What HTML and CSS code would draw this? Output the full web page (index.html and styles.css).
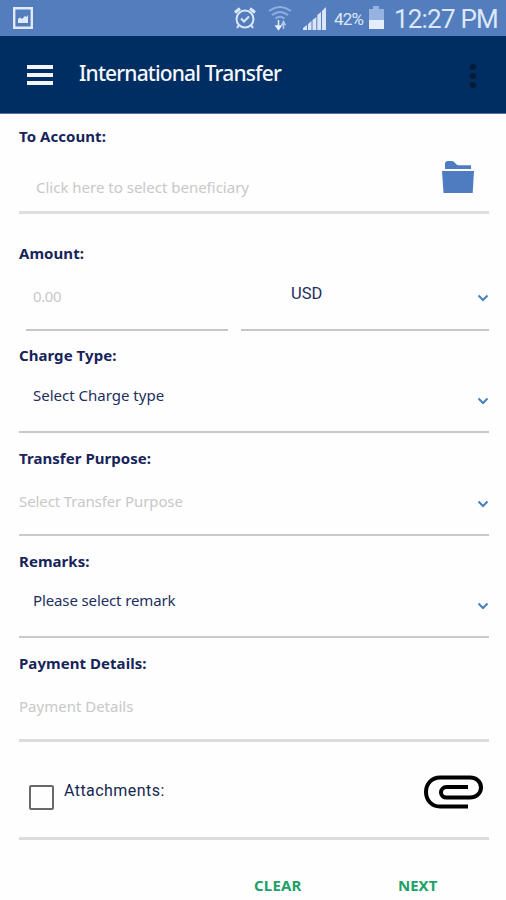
FILE: index.html
```html
<!DOCTYPE html>
<html lang="en">
<head>
<meta charset="utf-8">
<title>International Transfer</title>
<link rel="stylesheet" href="styles.css">
</head>
<body>
<div class="status">
  <svg class="shot" width="20" height="22" viewBox="0 0 20 22"><path d="M1.2 1.2h17.6v19.6H1.2z" fill="none" stroke="#e0eafa" stroke-width="2.4"/><path d="M5 16V12l2-1.500 2 1.500 3-3 1.500 1L15 8v8z" fill="#e0eafa"/></svg>
  <svg class="alarm" width="24" height="24" viewBox="0 0 24 24" fill="none" stroke="#dce8fa" stroke-width="2"><circle cx="12" cy="13" r="8.500"/><path d="M2 6.500 7 2.500M22 6.500 17 2.500" stroke-width="3"/><path d="M8 12.500l3 3 5-5M6 19l-2 3M18 19l2 3"/></svg>
  <svg class="wifi" width="24" height="26" viewBox="0 0 24 26" fill="none" stroke="#8fafe0" stroke-width="2"><path d="M1 5Q12-3 23 5M4 9q8-6 16 0M7.500 12.500q4.500-3.500 9 0"/><path d="M10.500 14v8M8 20l2.500 3.500L13 20z" stroke="#e6effc" fill="#e6effc" stroke-width="1.500"/><path d="M15.500 23v-7M14 18.500l1.500-3 1.500 3z" stroke="#b4caec" stroke-width="1.500"/></svg>
  <svg class="signal" width="23" height="23" viewBox="0 0 23 23" fill="#d9e6f9"><path d="M0 23v-2l4-3v5zM5 23v-6l3.500-3v9zM9.500 23V13l3.800-3v13zM14.300 23V8L18 5v18zM19 23V4L23 0v23z"/></svg>
  <span class="pct">42%</span>
  <svg class="battery" width="15" height="23" viewBox="0 0 15 23"><path d="M0 3h4V0h6v3h5v11H0z" fill="#94b3e1"/><path d="M0 14h15v9H0z" fill="#e4edfb"/></svg>
  <span class="time">12:27 PM</span>
</div>
<header class="bar">
  <div class="burger"><i></i><i></i><i></i></div>
  <h1>International Transfer</h1>
  <div class="dots"><i></i><i></i><i></i></div>
</header>
<main>
  <section class="field account">
    <label>To Account:</label>
    <div class="row"><span class="hint">Click here to select beneficiary</span>
      <svg class="folder" width="32" height="32" viewBox="0 0 32 32" fill="#4f7cc0"><path d="M3 8V3q0-3 3-3h4q2 0 4 3 1 1.200 3 1.200h12V8z"/><path d="M0 10h32l-1.300 22H1.500z"/></svg>
    </div>
  </section>
  <section class="field amount">
    <label>Amount:</label>
    <div class="split">
      <div class="cell sum"><span class="hint">0.00</span></div>
      <div class="cell currency"><span class="value">USD</span><svg class="chev" width="12" height="8" viewBox="0 0 12 8"><path d="M1.500 1.500 6 6l4.500-4.500"/></svg></div>
    </div>
  </section>
  <section class="field charge">
    <label>Charge Type:</label>
    <div class="row"><span class="value">Select Charge type</span><svg class="chev" width="12" height="8" viewBox="0 0 12 8"><path d="M1.500 1.500 6 6l4.500-4.500"/></svg></div>
  </section>
  <section class="field purpose">
    <label>Transfer Purpose:</label>
    <div class="row"><span class="hint">Select Transfer Purpose</span><svg class="chev" width="12" height="8" viewBox="0 0 12 8"><path d="M1.500 1.500 6 6l4.500-4.500"/></svg></div>
  </section>
  <section class="field remarks">
    <label>Remarks:</label>
    <div class="row"><span class="value">Please select remark</span><svg class="chev" width="12" height="8" viewBox="0 0 12 8"><path d="M1.500 1.500 6 6l4.500-4.500"/></svg></div>
  </section>
  <section class="field details">
    <label>Payment Details:</label>
    <div class="row"><span class="hint">Payment Details</span></div>
  </section>
  <section class="attach">
    <span class="box"></span><span class="caption">Attachments:</span>
    <svg class="clip" width="59" height="34" viewBox="0 0 59 34" fill="none" stroke="#000" stroke-width="4"><path d="M44 31.500H16C7.500 31.500 2 25 2 17S7.500 2.500 16 2.500H46c6 0 11 4 11 10s-5 10-11 10H22.500c-3 0-5.500-2-5.500-5s2.500-5.500 5.500-5.500H44"/></svg>
  </section>
  <footer><span class="clear">CLEAR</span><span class="next">NEXT</span></footer>
</main>
</body>
</html>
```
FILE: styles.css
```css
* { box-sizing: border-box; }
body { margin: 0; width: 506px; height: 900px; overflow: hidden; background: #fefefe; font-family: "Noto Sans", "Open Sans", sans-serif; color: #152653; }
span, label, h1 { white-space: nowrap; }
svg { display: block; flex: none; }

.status { height: 36px; background: #537dbd; display: flex; align-items: flex-start; font-family: Roboto, sans-serif; color: #dce8fa; }
.shot { margin: 7px 0 0 13px; }
.alarm { margin: 6px 0 0 200px; }
.wifi { margin: 6px 0 0 11px; }
.signal { margin: 7px 0 0 11px; }
.pct { width: 34px; margin: 8px 0 0 8px; font-size: 17px; line-height: 22px; letter-spacing: -0.8px; }
.battery { margin: 6px 0 0 1px; }
.time { margin: 4px 0 0 10px; font-size: 26px; line-height: 31px; letter-spacing: -0.8px; }

.bar { height: 78px; background: #002e62; border-bottom: 1px solid #55739b; display: flex; align-items: flex-start; }
.burger { margin: 29px 0 0 27px; width: 26px; display: grid; gap: 4px; }
.burger i { height: 4px; background: #f4f4fb; }
h1 { margin: 22px 0 0 26px; font-size: 21px; line-height: 30px; font-weight: 500; color: #f5f7fc; letter-spacing: -0.85px; }
.dots { margin: 28px 30px 0 auto; display: grid; gap: 3px; }
.dots i { width: 6px; height: 6px; border-radius: 50%; background: #071a30; }

.field { display: flex; flex-direction: column; padding: 15px 17px 0 19px; height: 103px; }
label { font-size: 15px; line-height: 20px; font-weight: 700; color: #17245a; letter-spacing: 0.05px; }
.row { flex: 1; display: flex; align-items: flex-start; justify-content: space-between; border-bottom: 2px solid #c9c9c9; }
.hint, .value { font-size: 15px; line-height: 20px; }
.hint { color: #c8c8c8; }
.value { color: #1d2f60; }
.chev { margin: 32px 0 0; fill: none; stroke: #4780bd; stroke-width: 2; }

.account { height: 100px; padding-top: 12px; }
.account .row { border-bottom: 3px solid #dedede; }
.account .hint { margin: 31px 0 0 17px; }
.folder { margin: 15px 15px 0 0; }
.amount { height: 117px; padding-top: 29px; }
.split { flex: 1; display: grid; grid-template-columns: 202px 248px; justify-content: space-between; padding-left: 7px; }
.cell { display: flex; align-items: flex-start; justify-content: space-between; border-bottom: 2px solid #c6c6c6; }
.sum .hint { margin: 23px 0 0 7px; letter-spacing: -0.4px; }
.currency .value { margin: 21px 0 0 50px; font-family: Roboto, sans-serif; font-size: 16.5px; }
.currency .chev { margin-top: 31px; }
.charge { height: 102px; padding-top: 14px; }
.charge .value { margin: 20px 0 0 14px; }
.purpose .hint { margin-top: 23px; letter-spacing: -0.1px; }
.remarks { height: 102px; }
.remarks .value { margin: 19px 0 0 14px; letter-spacing: -0.12px; }
.remarks .chev { margin-top: 31px; }
.details { height: 104px; }
.details .row { border-bottom: 3px solid #dcdcdc; }
.details .hint { margin-top: 23px; }

.attach { height: 98px; margin: 0 17px 0 19px; display: flex; align-items: flex-start; border-bottom: 3px solid #dcdcdc; }
.box { width: 25px; height: 25px; margin: 43px 0 0 10px; border: 2px solid #686868; border-radius: 2px; }
.caption { margin: 38px 0 0 10px; font-family: Roboto, sans-serif; font-size: 16px; line-height: 22px; letter-spacing: 0.45px; }
.clip { margin: 33px 6px 0 auto; }

footer { display: flex; padding: 35px 0 0 254px; font-size: 15px; line-height: 20px; font-weight: 700; color: #20a067; }
.clear { width: 144px; letter-spacing: 0.2px; }
```
